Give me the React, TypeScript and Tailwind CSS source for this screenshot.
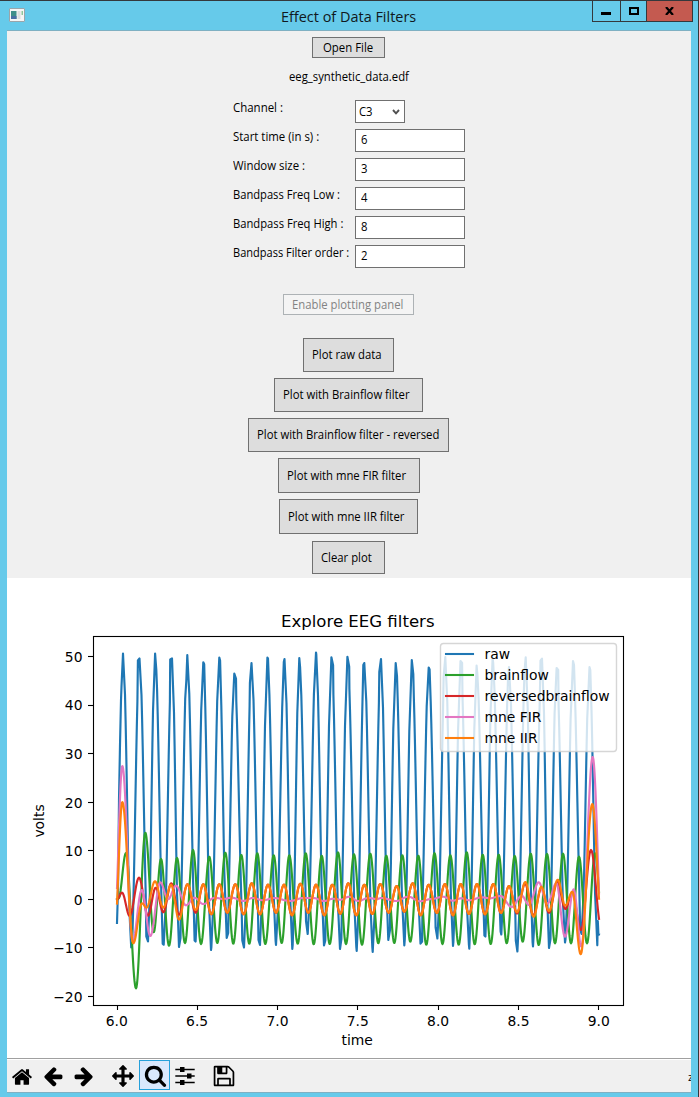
import React from "react";

type Pt = [number, number];

// Turning points of each trace; the curve between two of them is half a cosine.
const GREEN: Pt[] = [
  [117, 899.4], [118.5, 898.5], [126, 853], [136, 988.3], [145.3, 832.7], [153.7, 932.3], [161, 859], [169, 945.7],
  [177, 858], [185, 943], [193, 850], [201, 944], [209.3, 856.7], [217.3, 943], [225.3, 852.7], [233.3, 943.7],
  [241.3, 855], [249.3, 943.7], [257.3, 853.3], [265.3, 944], [273.7, 855.3], [281.7, 943], [289.3, 855.3],
  [297.7, 943.7], [305.7, 853.3], [313.7, 944.3], [321.7, 855.7], [329.7, 944], [338, 852.3], [346, 944],
  [354, 854.3], [362, 944.7], [370.3, 853.7], [378.3, 943.3], [386.3, 855.7], [394.3, 943], [402.3, 855.3],
  [410.3, 941.7], [418.3, 855.7], [426.3, 944.7], [434.5, 853.2], [442.5, 944], [450.3, 855.3], [458.7, 944.7],
  [466.7, 852.3], [474.7, 944.3], [482.7, 854.7], [490.7, 944], [498.7, 854.7], [506.7, 943.3], [514.7, 856],
  [522.7, 941.7], [530.7, 853.7], [538.7, 945], [547, 854], [555, 943.3], [563, 853.7], [571, 943.3], [579, 856.7],
  [587, 943.3], [595, 853.3], [603, 930],
];

const ORANGE: Pt[] = [
  [115, 925], [122.3, 802], [133.3, 943.3], [142, 903.3], [146.5, 907.7], [155, 881.3], [163.3, 907.7], [171, 884.7],
  [179, 919.7], [187.4, 884.3], [195.7, 910], [203.3, 884.3], [211.3, 914.3], [219.3, 884.3], [227.3, 912.7],
  [235.3, 884.3], [243.7, 914.3], [251.7, 883.3], [260, 914.3], [268, 884.7], [276, 912.7], [284, 884.7],
  [292, 915.3], [300.3, 883.7], [308.3, 912.7], [316, 884.7], [324.3, 915.3], [332.3, 884.7], [340.3, 913.7],
  [348.3, 883.3], [356.3, 915.3], [364.3, 884.7], [372.3, 914], [380.3, 884], [388.7, 912.7], [396.7, 886],
  [404.3, 911.7], [412.7, 883.3], [420.7, 915.3], [428.7, 884.7], [436.8, 913], [444.9, 884], [453, 915.3],
  [460.7, 884], [469, 914], [477, 884], [485, 914.3], [493.3, 884], [501, 913], [509, 886], [517, 912.3],
  [525.3, 882], [533.7, 916.7], [541.3, 886.7], [549, 911], [557.7, 879.7], [565.3, 905.7], [572.3, 891.7],
  [580.7, 954.2], [592.3, 804], [602, 925],
];

const RED: Pt[] = [
  [117, 899.4], [122, 892.7], [129.7, 916], [139, 877.7], [148, 915.7], [155.7, 887.7], [163.3, 912.3],
  [171.3, 883.3], [179, 914.7], [187.5, 884.3], [195.7, 912.7],
  ...ORANGE.slice(11, 50),
  [517, 913.5], [525, 883.5], [533.3, 915.5], [541.5, 888], [549, 912.7], [557.3, 882], [565.3, 909],
  [572.3, 893], [581, 930], [591, 850], [601, 926],
];

const PINK: Pt[] = [
  [114.5, 925], [122.3, 766], [132.7, 941], [141.7, 890], [150.3, 936], [160.3, 882.3], [168, 899.3], [176, 885.7],
  [186, 905.3], [194.3, 897.7], [203.3, 904], [215, 897.7], [223.3, 899], [231.7, 897.7], [243.7, 900.9],
  [252.7, 898], [263.3, 900.3], [274, 898], [290, 901], [303.3, 898], [313.3, 898], [324, 901], [333.3, 898.7],
  [340.3, 899.7], [349.3, 896.7], [358.3, 901], [368.3, 898], [376.7, 899], [381.7, 898], [396, 901],
  [408.3, 896.7], [420, 901.3], [431.7, 899], [443.3, 896.7], [452.7, 900.7], [461.3, 898.3], [469.3, 900.3],
  [481.7, 897.3], [490, 898.3], [500.7, 896], [511.7, 907], [521.7, 895.7], [529, 905], [538.7, 882.3],
  [547.3, 903.7], [556.3, 883.3], [565, 936.7], [573.7, 889.3], [581.3, 946.7], [592.7, 757], [603, 960],
];

// Raw extremes: x, y, then an optional shoulder given as its offset from the tip.
type Tip = [number, number, number?, number?];
const PEAKS: Tip[] = [
  [123, 653.5, -1.5, 33], [139.5, 658.5, -1.6, 2], [155.1, 653.5, 1.2, 16], [172, 658.5, -1.8, 1],
  [187.3, 655, -1, 26], [203.3, 662.3, 0.9, 2], [219.3, 657.5, 0.8, 3], [234.3, 673.5, 1.7, 5], [251.5, 663, -1.6, 20],
  [267.4, 657.5, 0.6, 1], [284.5, 659, -0.7, 3], [299.3, 658, 0.8, 9], [316, 652.5, 0.3, 2], [331.4, 657.3, 1.7, 8],
  [347.4, 656.8, 1.8, 10], [364.3, 663, -1, 2], [381, 659, -1.7, 13], [395.7, 663, 1.3, 13], [411.8, 660, 1.5, 14],
  [428.7, 667.5, 0.9, 2], [445.3, 657, -1.7, 20], [460.5, 661, 1.6, 2], [476.6, 665.5, 0.8, 9], [492.6, 658, 0.6, 5],
  [509, 667, -1, 12], [525.7, 657.3, -1.2, 14], [542, 658.7, -1.5, 2], [556.6, 668, 1.6, 2], [573, 661, 1, 4],
  [589.5, 667, 0.8, 3],
];
const TROUGHS: Tip[] = [
  [131.2, 947.5, 1, -4], [148, 941.5, -1.7, -5], [163.7, 944.7, -1, -1], [179, 947, 1.5, -9], [195.6, 941.5, -1, -1],
  [211, 950, 0.4, -3], [226.7, 938, 1.5, -5], [244, 947.5, -1.7, -7], [260, 945, -1.5, -5], [276, 945, -0.4, -4],
  [292.3, 949, 0.4, -4], [307.7, 934, -1.7, -13], [324, 945.5, 1.3, -5], [340, 949, 1.4, -10], [356.7, 951, -0.4, -4],
  [372.7, 952, -0.4, -5], [388.3, 940, 1.7, -10], [404.3, 945.5, 0.5, -6], [420.5, 943.7, 1.6, -2],
  [437.4, 938.5, -1.8, -11], [453, 946, 0.4, -4], [469.3, 948.7, -0.4, -4], [485.4, 936.5, -1, -1],
  [501.3, 934.5, -0.7, -3], [517.4, 951.5, -1.6, -11], [533, 946.5, -0.4, -4], [549, 948, 1.5, -9],
  [565, 942.5, 0.5, -3], [581.6, 934, -1.4, -4], [597.3, 945.3, -1, -24],
];

const ease = (a: Pt, b: Pt, x: number) => {
  const t = (x - a[0]) / (b[0] - a[0]);
  return a[1] + ((b[1] - a[1]) * (1 - Math.cos(Math.PI * t))) / 2;
};

const toPath = (pts: Pt[]) => "M" + pts.map((p) => p[0].toFixed(2) + " " + p[1].toFixed(2)).join("L");

function smooth(keys: Pt[], from = 117, to = 599) {
  const out: Pt[] = [];
  let k = 0;
  for (let x = from; x <= to; x += 0.5) {
    while (k < keys.length - 2 && x > keys[k + 1][0]) k++;
    out.push([x, ease(keys[k], keys[k + 1], x)]);
  }
  return toPath(out);
}

function rawTrace() {
  const tips: Tip[] = PEAKS.flatMap((p, i) => [p, TROUGHS[i]]);
  const out: Pt[] = [[117, 923], [118, 890], [119, 800], [120, 745], [121, 700]];
  tips.forEach((tip, i) => {
    const [x, y, dx = 0, dy = 0] = tip;
    const pair: Pt[] = [[x, y], [x + dx, y + dy]];
    pair.sort((a, b) => a[0] - b[0]);
    out.push(...pair);
    const next = tips[i + 1];
    if (!next) return;
    for (let px = x + 2; px <= next[0] - 1.9; px += 0.6) {
      out.push([px, ease([x, y], [next[0], next[1]], px)]);
    }
  });
  out.push([597.8, 921], [598.4, 934], [599, 934.3]);
  return toPath(out);
}

const TRACES = [
  { name: "raw", color: "#1f77b4", d: rawTrace() },
  { name: "brainflow", color: "#2ca02c", d: smooth(GREEN) },
  { name: "reversedbrainflow", color: "#d62728", d: smooth(RED) },
  { name: "mne FIR", color: "#e377c2", d: smooth(PINK) },
  { name: "mne IIR", color: "#ff7f0e", d: smooth(ORANGE) },
];

const Y_TICKS = ["50", "40", "30", "20", "10", "0", "−10", "−20"];
const X_TICKS = ["6.0", "6.5", "7.0", "7.5", "8.0", "8.5", "9.0"];

function Chart() {
  return (
    <svg viewBox="7 578 684 480" className="block h-[480px] w-[684px] bg-white font-['DejaVu_Sans',sans-serif]" fill="#000">
      <text x="281" y="627" fontSize="16.67" textLength="153.5" lengthAdjust="spacingAndGlyphs">Explore EEG filters</text>
      {Y_TICKS.map((t, i) => (
        <g key={t}>
          <path d={`M88 ${Math.floor(656.5 + i * 48.57) + 0.5}h5`} stroke="#000" strokeWidth="1.1" />
          <text x="82.5" y={661.8 + i * 48.57} fontSize="13.89" textAnchor="end">{t}</text>
        </g>
      ))}
      {X_TICKS.map((t, i) => (
        <g key={t}>
          <path d={`M${Math.floor(117 + i * 80.33) + 0.5} 1005v5`} stroke="#000" strokeWidth="1.1" />
          <text x={116.8 + i * 80.33} y="1026" fontSize="13.89" textAnchor="middle">{t}</text>
        </g>
      ))}
      <text x="357.2" y="1045" fontSize="13.89" textAnchor="middle">time</text>
      <text transform="translate(44 821) rotate(-90)" fontSize="13.89" textAnchor="middle">volts</text>
      {TRACES.map((t) => (
        <path key={t.name} d={t.d} fill="none" stroke={t.color} strokeWidth="2.15" strokeLinejoin="round" strokeLinecap="square" />
      ))}
      <rect x="93.5" y="636.5" width="530" height="369" fill="none" stroke="#000" strokeWidth="1.1" />
      <rect x="440.5" y="643.5" width="176" height="108" rx="3" fill="#fff" fillOpacity="0.8" stroke="#ccc" strokeOpacity="0.8" strokeWidth="1.4" />
      {TRACES.map((t, i) => (
        <g key={t.name}>
          <path d={`M446 ${654 + i * 21}h27`} stroke={t.color} strokeWidth="2.08" strokeLinecap="square" />
          <text x="484.5" y={659 + i * 21} fontSize="13.89">{t.name}</text>
        </g>
      ))}
    </svg>
  );
}

const FIELDS: [string, string, string][] = [
  ["Start time (in s) :", "6", "scale-x-[0.95]"],
  ["Window size :", "3", "scale-x-[0.95]"],
  ["Bandpass Freq Low :", "4", "scale-x-[0.93]"],
  ["Bandpass Freq High :", "8", "scale-x-[0.935]"],
  ["Bandpass Filter order :", "2", "scale-x-[0.92]"],
];

const BUTTONS: [string, string][] = [
  ["Plot raw data", "h-[34px] w-[91px]"],
  ["Plot with Brainflow filter", "mt-[6px] h-[34px] w-[149px]"],
  ["Plot with Brainflow filter - reversed", "mt-[6px] h-[34px] w-[201px]"],
  ["Plot with mne FIR filter", "mt-[6px] h-[35px] w-[142px]"],
  ["Plot with mne IIR filter", "mt-[6px] h-[35px] w-[139px]"],
  ["Clear plot", "mt-[7px] h-[33px] w-[73px]"],
];

const Label = ({ children, scale = "scale-x-[0.942]" }: { children: React.ReactNode; scale?: string }) => (
  <span className={`inline-block origin-left whitespace-nowrap ${scale}`}>{children}</span>
);

const FaIcon = ({ d, className }: { d: string; className: string }) => (
  <svg viewBox="0 0 1792 1792" className={className} fill="#000"><path d={d} /></svg>
);

const HOME = "M1472 992v480q0 26-19 45t-45 19h-384v-384h-256v384h-384q-26 0-45-19t-19-45v-480q0-1 .5-3t.5-3l575-474 575 474q1 2 1 6zm223-69l-62 74q-8 9-21 11h-3q-13 0-21-7l-692-577-692 577q-12 8-24 7-13-2-21-11l-62-74q-8-10-7-23.5t11-21.5l719-599q32-26 76-26t76 26l244 204v-195q0-14 9-23t23-9h192q14 0 23 9t9 23v408l219 182q10 8 11 21.5t-7 23.5z";
const ARROW = "M1664 896v128q0 53-32.5 90.5t-84.5 37.5h-704l293 294q38 36 38 90t-38 90l-75 76q-37 37-90 37-52 0-91-37l-651-652q-37-37-37-90 0-52 37-91l651-650q38-38 91-38 52 0 90 38l75 74q38 38 38 91t-38 91l-293 293h704q52 0 84.5 37.5t32.5 90.5z";
const MOVE = "M1792 896q0 26-19 45l-256 256q-19 19-45 19t-45-19-19-45v-128h-384v384h128q26 0 45 19t19 45-19 45l-256 256q-19 19-45 19t-45-19l-256-256q-19-19-19-45t19-45 45-19h128v-384h-384v128q0 26-19 45t-45 19-45-19l-256-256q-19-19-19-45t19-45l256-256q19-19 45-19t45 19 19 45v128h384v-384h-128q-26 0-45-19t-19-45 19-45l256-256q19-19 45-19t45 19l256 256q19 19 19 45t-19 45-45 19h-128v384h384v-128q0-26 19-45t45-19 45 19l256 256q19 19 19 45z";
const SEARCH = "M1216 832q0-185-131.5-316.5t-316.5-131.5-316.5 131.5-131.5 316.5 131.5 316.5 316.5 131.5 316.5-131.5 131.5-316.5zm512 832q0 52-38 90t-90 38q-54 0-90-38l-343-342q-179 124-399 124-143 0-273.5-55.5t-225-150-150-225-55.5-273.5 55.5-273.5 150-225 225-150 273.5-55.5 273.5 55.5 225 150 150 225 55.5 273.5q0 220-124 399l343 343q37 37 37 90z";
const SAVE = "M512 1536h768v-384h-768v384zm896 0h128v-896q0-14-10-38.5t-20-34.5l-281-281q-10-10-34-20t-39-10v416q0 40-28 68t-68 28h-576q-40 0-68-28t-28-68v-416h-128v1280h128v-416q0-40 28-68t68-28h832q40 0 68 28t28 68v416zm-384-928v-320q0-13-9.5-22.5t-22.5-9.5h-192q-13 0-22.5 9.5t-9.5 22.5v320q0 13 9.5 22.5t22.5 9.5h192q13 0 22.5-9.5t9.5-22.5zm640 32v928q0 40-28 68t-68 28h-1344q-40 0-68-28t-28-68v-1344q0-40 28-68t68-28h928q40 0 88 20t76 48l280 280q28 28 48 76t20 88z";

function TitleBar() {
  return (
    <header className="flex h-[29px] shrink-0 items-start">
      <svg viewBox="0 0 16 14" className="mt-[7px] ml-[9px] h-[14px] w-[16px] shrink-0">
        <rect x="0.5" y="0.5" width="15" height="13" rx="0.5" fill="#f6f6f6" stroke="#9aa5aa" />
        <rect x="2" y="3" width="5.5" height="8" fill="#3f8f8a" />
        <rect x="2" y="8" width="5.5" height="3" fill="#4a6fa5" />
        <rect x="8.5" y="3" width="3" height="8" fill="#dedede" />
        <rect x="12.5" y="3" width="1.5" height="4" fill="#8fc79c" />
      </svg>
      <div className="flex h-[29px] w-[567px] items-center pl-[256px] text-[15px] text-[#101820]">
        <span className="inline-block origin-left scale-x-[0.963] whitespace-nowrap">Effect of Data Filters</span>
      </div>
      <div className="flex h-[21px] w-[101px] shrink-0 border-r border-b border-l border-[#34383c]">
        <div className="flex w-[27px] items-center justify-center"><i className="mt-[5px] mr-[1px] h-[3px] w-[10px] bg-black" /></div>
        <div className="flex w-[26px] items-center justify-center border-l border-[#34383c]"><i className="h-[8px] w-[10px] border-2 border-black" /></div>
        <div className="flex flex-1 items-center justify-center border-l border-[#34383c] bg-[#c45a50]">
          <svg viewBox="0 0 9 8" className="h-[8px] w-[9px]"><path d="M1 0L8 8M8 0L1 8" stroke="#000" strokeWidth="2.2" /></svg>
        </div>
      </div>
    </header>
  );
}

export default function App() {
  return (
    <div className="flex h-[1097px] w-[699px] flex-col overflow-hidden border-t border-r border-[#34383c] bg-[#66caea] font-['Open_Sans','Noto_Sans',sans-serif] text-[12px] leading-[16px] text-black">
      <TitleBar />
      <main className="ml-[7px] flex h-[1063px] w-[684px] flex-col border-t border-b border-[#7fb0c2] bg-[#f0f0f0]">
        <section className="flex h-[547px] shrink-0 flex-col items-center pt-[6px]">
          <button className="ml-[-1px] flex h-[21px] w-[73px] items-center border border-[#707070] bg-[#ddd] pl-[10px]"><Label scale="scale-x-[0.95]">Open File</Label></button>
          <div className="mt-[11px] h-[16px] w-[120px]"><Label>eeg_synthetic_data.edf</Label></div>
          <div className="mt-[15px] flex w-[232px] flex-col gap-[6px]">
            <div className="flex h-[23px]">
              <div className="w-[122px]"><Label scale="scale-x-[0.955]">Channel :</Label></div>
              <div className="flex w-[50px] items-center justify-between border border-[#707070] bg-white pr-[4px] pl-[3px]">
                <Label>C3</Label>
                <svg viewBox="0 0 8 6" className="h-[6px] w-[8px]"><path d="M1 1L4 4.3L7 1" fill="none" stroke="#505050" strokeWidth="1.9" /></svg>
              </div>
            </div>
            {FIELDS.map(([name, value, scale]) => (
              <div key={name} className="flex h-[23px]">
                <div className="w-[122px]"><Label scale={scale}>{name}</Label></div>
                <div className="w-[110px] border border-[#707070] bg-white pt-[2px] pl-[5px]"><Label>{value}</Label></div>
              </div>
            ))}
          </div>
          <button className="mt-[26px] ml-[-1px] flex h-[21px] w-[131px] shrink-0 items-center border border-[#adb2b5] bg-[#f4f4f4] pl-[8px] text-[#838383]"><Label>Enable plotting panel</Label></button>
          <div className="mt-[23px] ml-[-1px] flex flex-col items-center">
            {BUTTONS.map(([name, size]) => (
              <button key={name} className={`${size} flex shrink-0 items-center border border-[#707070] bg-[#ddd] pl-[8px]`}><Label>{name}</Label></button>
            ))}
          </div>
        </section>
        <Chart />
        <footer className="flex h-[34px] shrink-0 items-start border-t border-[#a0a0a0]">
          <div className="flex h-full w-full items-start border-t border-white">
            <FaIcon d={HOME} className="mt-[6px] ml-[4px] h-[22px] w-[22px]" />
            <FaIcon d={ARROW} className="mt-[5px] ml-[9px] h-[22px] w-[22px]" />
            <FaIcon d={ARROW} className="mt-[5px] ml-[9px] h-[22px] w-[22px] -scale-x-100" />
            <FaIcon d={MOVE} className="mt-[5px] ml-[17px] h-[22px] w-[22px]" />
            <div className="ml-[5px] flex h-[30px] w-[31px] items-center justify-center border border-[#26a0da] bg-[#dae8fc]">
              <FaIcon d={SEARCH} className="ml-[1px] h-[23px] w-[23px]" />
            </div>
            <svg viewBox="0 0 20 22" className="mt-[5px] ml-[5px] h-[22px] w-[20px]">
              <path d="M0.3 4.5H19.7M0.3 11H19.7M0.3 17.5H19.7" stroke="#000" strokeWidth="1.4" />
              <path d="M5 2h4.5v5H5zM12 8.5h4.5v5H12zM5 15h4.5v5H5z" />
            </svg>
            <FaIcon d={SAVE} className="mt-[4px] ml-[17px] h-[24px] w-[24px]" />
            <div className="ml-auto mt-[9px] w-[3px] overflow-hidden text-[11px]">z</div>
          </div>
        </footer>
      </main>
    </div>
  );
}
